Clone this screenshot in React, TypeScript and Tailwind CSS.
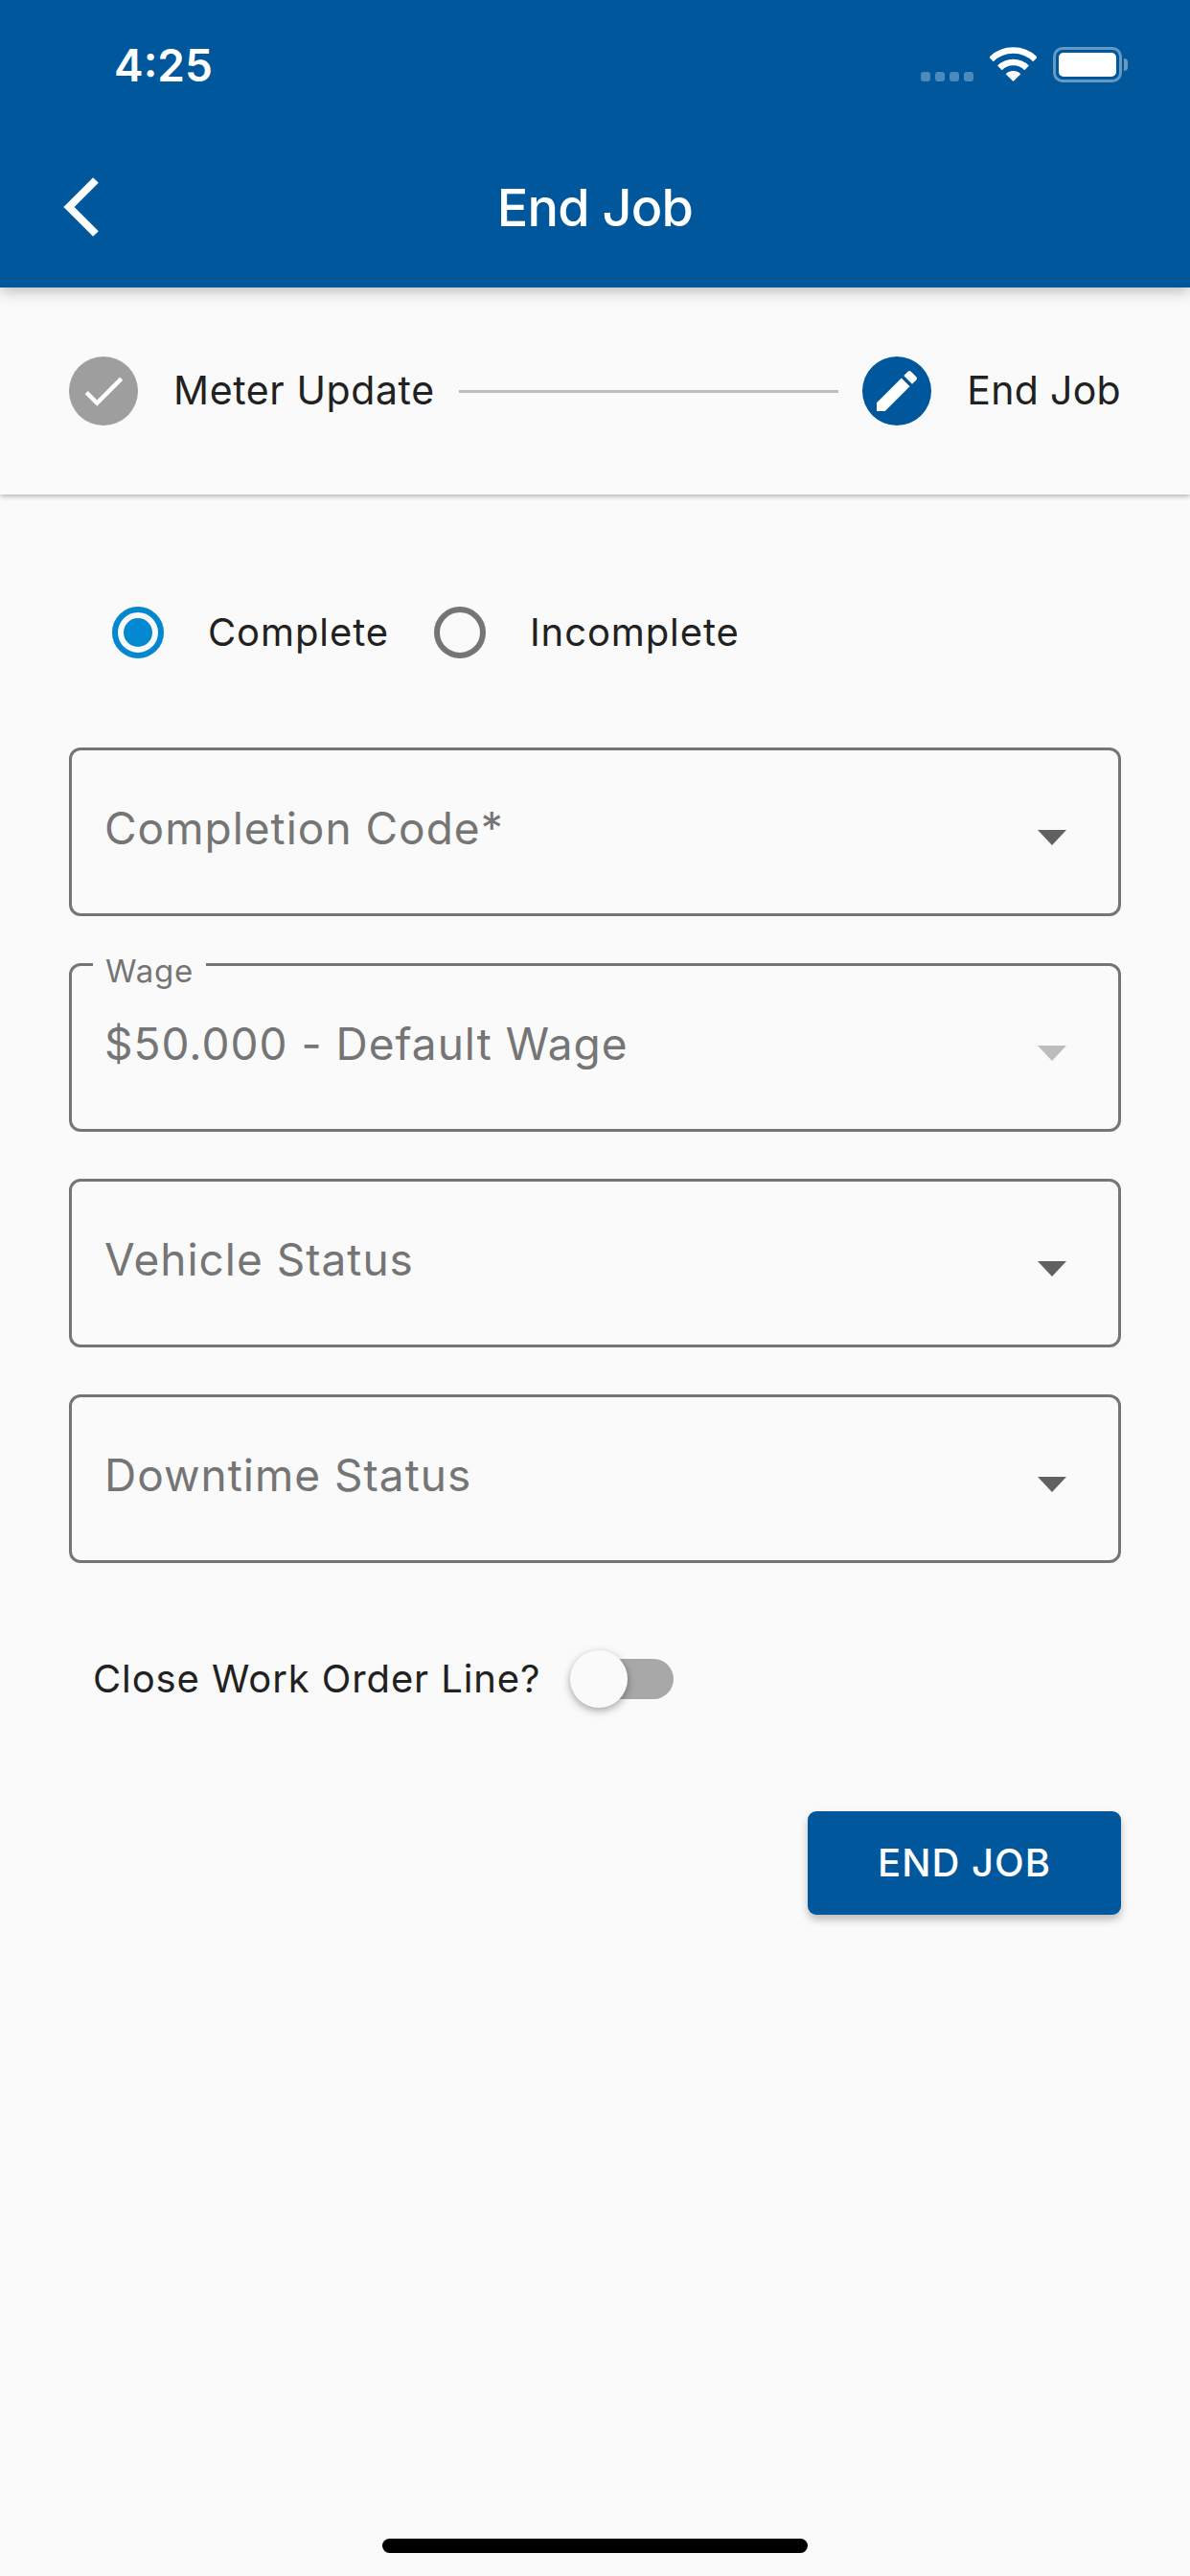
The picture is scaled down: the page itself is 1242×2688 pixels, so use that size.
const inter = "font-['Inter',sans-serif]";

function SelectField({ label, value, disabled }: { label?: string; value: string; disabled?: boolean }) {
  return (
    <div className="relative h-[176px] rounded-[12px] border-[3px] border-[#757575] pl-[34px] pr-[54px] flex justify-between">
      {label && (
        <span className="absolute left-[22px] top-[-13px] bg-[#fafafa] px-[13px] text-[33px] leading-[36px] tracking-[0.8px] text-[#757575]">
          {label}
        </span>
      )}
      <span className="mt-[53px] text-[46px] leading-[56px] tracking-[1px] text-[#757575]">{value}</span>
      <svg className="mt-[83px]" width="30" height="16" viewBox="0 0 30 16">
        <path d="M0 0h30L15 16z" fill={disabled ? "#bdbdbd" : "#616161"} />
      </svg>
    </div>
  );
}

function Radio({ checked, label }: { checked?: boolean; label: string }) {
  return (
    <div className="flex items-center gap-[46px]">
      <div
        className={
          checked
            ? "w-[54px] h-[54px] rounded-full border-[6px] border-[#0288d1] flex items-center justify-center"
            : "w-[54px] h-[54px] rounded-full border-[6px] border-[#757575]"
        }
      >
        {checked && <div className="w-[30px] h-[30px] rounded-full bg-[#0288d1]" />}
      </div>
      <span className="text-[40px] leading-[48px] tracking-[0.9px] text-[#212121]">{label}</span>
    </div>
  );
}

export default function App() {
  return (
    <div className={`${inter} relative flex flex-col min-h-[2688px] w-full bg-[#fafafa]`}>
      {/* App bar */}
      <header className="relative z-20 h-[300px] bg-[#01579b] shadow-[0_4px_14px_rgba(0,0,0,0.25)]">
        <div className="h-[132px] pl-[119px] pr-[65px] pt-[40px] flex justify-between">
          <span className="text-[46px] leading-[56px] font-semibold text-white">4:25</span>
          <div className="flex items-start pt-[9px]">
            <div className="flex gap-[5px] mt-[26px] mr-[17px]">
              <div className="w-[10px] h-[10px] rounded-[3px] bg-white/30" />
              <div className="w-[10px] h-[10px] rounded-[3px] bg-white/30" />
              <div className="w-[10px] h-[10px] rounded-[3px] bg-white/30" />
              <div className="w-[10px] h-[10px] rounded-[3px] bg-white/30" />
            </div>
            <svg width="49" height="36" viewBox="0 0 49 36" fill="none" className="mr-[17px]">
              <path d="M1.5 13A32.5 32.5 0 0 1 47.5 13" stroke="white" strokeWidth="6.5" />
              <path d="M10.4 21.9A20 20 0 0 1 38.6 21.9" stroke="white" strokeWidth="6.5" />
              <path d="M24.5 36L16.7 28.2A11 11 0 0 1 32.3 28.2Z" fill="white" />
            </svg>
            <div className="flex items-center">
              <div className="w-[72px] h-[37px] rounded-[10px] border-[3px] border-white/40 p-[3px]">
                <div className="h-full rounded-[5px] bg-white" />
              </div>
              <div className="w-[4px] h-[13px] rounded-r-[4px] bg-white/40 ml-[2px]" />
            </div>
          </div>
        </div>
        <div className="h-[168px] grid grid-cols-[1fr_auto_1fr] items-start">
          <svg className="ml-[64px] mt-[52px]" width="42" height="64" viewBox="0 0 42 64" fill="none">
            <path d="M36 4L8 32l28 28" stroke="white" strokeWidth="8" />
          </svg>
          <h1 className="mt-[51px] text-[54px] leading-[68px] font-medium tracking-[-0.8px] text-white">End Job</h1>
        </div>
      </header>

      {/* Stepper */}
      <section className="relative z-10 h-[216px] pt-[72px] px-[72px] bg-[#fafafa] shadow-[0_2px_5px_rgba(0,0,0,0.28)] flex items-start">
        <div className="w-[72px] h-[72px] rounded-full bg-[#9e9e9e] flex items-center justify-center">
          <svg width="54" height="54" viewBox="0 0 24 24" fill="white">
            <path d="M9 16.17L4.83 12l-1.42 1.41L9 19 21 7l-1.41-1.41z" />
          </svg>
        </div>
        <span className="ml-[37px] text-[41px] leading-[70px] tracking-[0.6px] text-[#212121]">Meter Update</span>
        <div className="mt-[35px] mx-[25px] h-[3px] flex-1 bg-[#bdbdbd]" />
        <div className="w-[72px] h-[72px] rounded-full bg-[#01579b] flex items-center justify-center">
          <svg width="56" height="56" viewBox="0 0 24 24" fill="white">
            <path d="M3 17.25V21h3.75L17.81 9.94l-3.75-3.75L3 17.25zM20.71 7.04c.39-.39.39-1.02 0-1.41l-2.34-2.34c-.39-.39-1.02-.39-1.41 0l-1.83 1.83 3.75 3.75 1.83-1.83z" />
          </svg>
        </div>
        <span className="ml-[37px] text-[41px] leading-[70px] tracking-[0.3px] text-[#212121]">End Job</span>
      </section>

      {/* Form */}
      <main className="px-[72px] pt-[117px]">
        <div className="flex gap-[47px] pl-[45px]">
          <Radio checked label="Complete" />
          <Radio label="Incomplete" />
        </div>
        <div className="mt-[93px] flex flex-col gap-[49px]">
          <SelectField value="Completion Code*" />
          <SelectField label="Wage" value="$50.000 - Default Wage" disabled />
          <SelectField value="Vehicle Status" />
          <SelectField value="Downtime Status" />
        </div>
        <div className="mt-[91px] pl-[25px] flex items-center">
          <span className="text-[40px] leading-[60px] tracking-[0.9px] text-[#212121]">Close Work Order Line?</span>
          <div className="relative ml-[31px] w-[108px] h-[60px] flex items-center">
            <div className="ml-[6px] h-[42px] flex-1 rounded-full bg-[#a8a8a8]" />
            <div className="absolute left-0 top-0 w-[60px] h-[60px] rounded-full bg-[#fafafa] shadow-[0_3px_8px_rgba(0,0,0,0.35)]" />
          </div>
        </div>
        <div className="mt-[108px] flex justify-end">
          <button className="w-[327px] h-[108px] rounded-[9px] bg-[#01579b] text-[40px] font-medium tracking-[1px] text-white shadow-[0_5px_8px_rgba(0,0,0,0.25)]">
            END JOB
          </button>
        </div>
      </main>

      {/* Home indicator */}
      <div className="mt-auto pb-[24px] flex justify-center">
        <div className="w-[444px] h-[15px] rounded-[8px] bg-black" />
      </div>
    </div>
  );
}
